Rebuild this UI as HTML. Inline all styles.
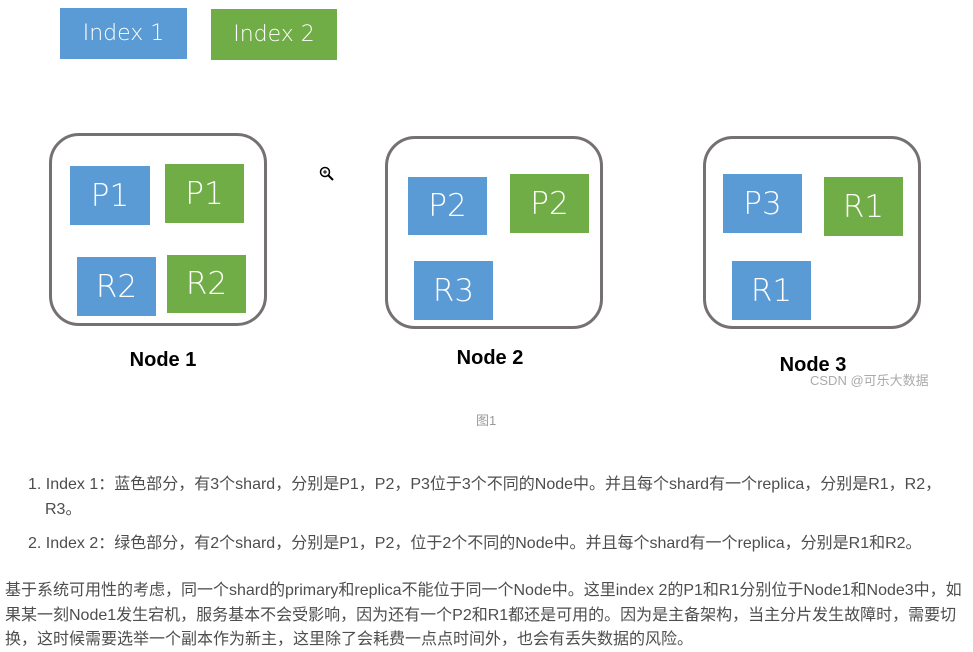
<!DOCTYPE html>
<html><head><meta charset="utf-8"><style>
body{margin:0;width:973px;height:652px;background:#fff;position:relative;overflow:hidden;font-family:"Liberation Sans","Noto Sans CJK SC",sans-serif}
.b{position:absolute;color:#fff;font-size:31px;display:flex;align-items:center;justify-content:center;font-family:"DejaVu Sans","Liberation Sans",sans-serif;font-weight:200}
.bl{background:#5b9bd5}.gr{background:#70ad47}
.n{position:absolute;border:3px solid #767171;border-radius:30px;box-sizing:border-box;width:218px;height:193px}
.lb{position:absolute;font-weight:bold;font-size:20px;color:#000;transform:translateX(-50%)}
.t{position:absolute;left:0;font-size:16px;color:#4d4d4d;white-space:nowrap}
</style></head><body>
<div class="b bl" style="left:60px;top:8px;width:127px;height:51px;font-size:22px">Index 1</div>
<div class="b gr" style="left:211px;top:9px;width:126px;height:51px;font-size:22px">Index 2</div>

<div class="n" style="left:49px;top:133px"></div>
<div class="b bl" style="left:70px;top:166px;width:80px;height:59px">P1</div>
<div class="b gr" style="left:165px;top:164px;width:79px;height:59px">P1</div>
<div class="b bl" style="left:77px;top:257px;width:79px;height:59px">R2</div>
<div class="b gr" style="left:167px;top:255px;width:79px;height:58px">R2</div>

<div class="n" style="left:385px;top:136px"></div>
<div class="b bl" style="left:408px;top:177px;width:79px;height:58px">P2</div>
<div class="b gr" style="left:510px;top:174px;width:79px;height:59px">P2</div>
<div class="b bl" style="left:414px;top:261px;width:79px;height:59px">R3</div>

<div class="n" style="left:703px;top:136px"></div>
<div class="b bl" style="left:723px;top:174px;width:79px;height:59px">P3</div>
<div class="b gr" style="left:824px;top:177px;width:79px;height:59px">R1</div>
<div class="b bl" style="left:732px;top:261px;width:79px;height:59px">R1</div>

<div class="lb" style="left:163px;top:349px">Node 1</div>
<div class="lb" style="left:490px;top:347px">Node 2</div>
<div class="lb" style="left:813px;top:354px">Node 3</div>
<div style="position:absolute;left:810px;top:370px;font-size:13px;color:#aaa">CSDN @可乐大数据</div>
<svg style="position:absolute;left:319px;top:166px" width="16" height="16"><circle cx="6" cy="6" r="4.5" fill="none" stroke="#000" stroke-width="1.5"/><line x1="9.5" y1="9.5" x2="14" y2="14" stroke="#000" stroke-width="2"/><line x1="4" y1="6" x2="8" y2="6" stroke="#000"/><line x1="6" y1="4" x2="6" y2="8" stroke="#000"/></svg>
<div style="position:absolute;left:476px;top:410px;font-size:13px;color:#999">图1</div>

<div class="t" style="left:28px;top:470px">1. Index 1：蓝色部分，有3个shard，分别是P1，P2，P3位于3个不同的Node中。并且每个shard有一个replica，分别是R1，R2，</div>
<div class="t" style="left:45px;top:495px">R3。</div>
<div class="t" style="left:28px;top:529px">2. Index 2：绿色部分，有2个shard，分别是P1，P2，位于2个不同的Node中。并且每个shard有一个replica，分别是R1和R2。</div>
<div class="t" style="left:5px;top:576px">基于系统可用性的考虑，同一个shard的primary和replica不能位于同一个Node中。这里index 2的P1和R1分别位于Node1和Node3中，如</div>
<div class="t" style="left:5px;top:601px">果某一刻Node1发生宕机，服务基本不会受影响，因为还有一个P2和R1都还是可用的。因为是主备架构，当主分片发生故障时，需要切</div>
<div class="t" style="left:5px;top:625px">换，这时候需要选举一个副本作为新主，这里除了会耗费一点点时间外，也会有丢失数据的风险。</div>
</body></html>
